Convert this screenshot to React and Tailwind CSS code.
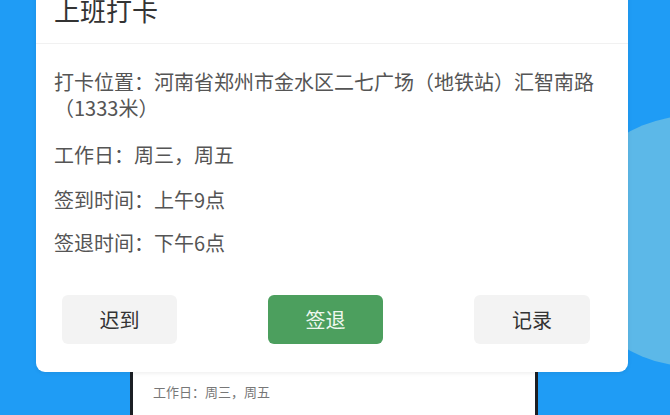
import React from 'react';

const font = { fontFamily: '"Noto Sans CJK SC", "Noto Sans", sans-serif' };

export default function App() {
  const rows = [
    { label: '工作日：', value: '周三，周五', gap: 'mt-[21px]' },
    { label: '签到时间：', value: '上午9点', gap: 'mt-[19px]' },
    { label: '签退时间：', value: '下午6点', gap: 'mt-[17px]' },
  ];

  return (
    <div
      className="relative w-[670px] h-[415px] overflow-hidden bg-[#1f9cf5]"
      style={font}
    >
      {/* decorative light circle on the right */}
      <div className="absolute left-[565px] top-[116px] w-[250px] h-[250px] rounded-full bg-[#5cb8e8]" />

      {/* phone screen behind the dialog */}
      <div className="relative ml-[130px] w-[408px] h-full border-x-[3px] border-[#1b1f24] bg-white flex flex-col justify-end">
        <div className="pl-[20px] pb-[14px] text-[13px] text-[#777]">工作日：周三，周五</div>
      </div>

      {/* dialog */}
      <div className="absolute left-[36px] top-[-20px] w-[592px] bg-white rounded-[9px] shadow-[0_1px_4px_rgba(0,0,0,0.08)]">
        <div className="h-[64px] flex items-center px-[18px] pb-[3px] border-b border-[#f1f1f1]">
          <span className="text-[26px] leading-[32px] text-[#333]">上班打卡</span>
        </div>

        <div className="px-[18px] pt-[25px] text-[20px] leading-[26px] text-[#555]">
          <div>打卡位置：河南省郑州市金水区二七广场（地铁站）汇智南路（1333米）</div>
          {rows.map(r => (
            <div key={r.label} className={r.gap}>
              {r.label}{r.value}
            </div>
          ))}
        </div>

        <div className="flex pl-[26px] mt-[39px] pb-[28px] gap-[91px]">
          <button className="w-[115px] h-[49px] rounded-[6px] bg-[#f3f3f3] text-[20px] text-[#333]">迟到</button>
          <button className="w-[115px] h-[49px] rounded-[6px] bg-[#4c9f5e] text-[20px] text-[#eef8ef]">签退</button>
          <button className="w-[116px] h-[49px] rounded-[6px] bg-[#f3f3f3] text-[20px] text-[#333]">记录</button>
        </div>
      </div>
    </div>
  );
}
